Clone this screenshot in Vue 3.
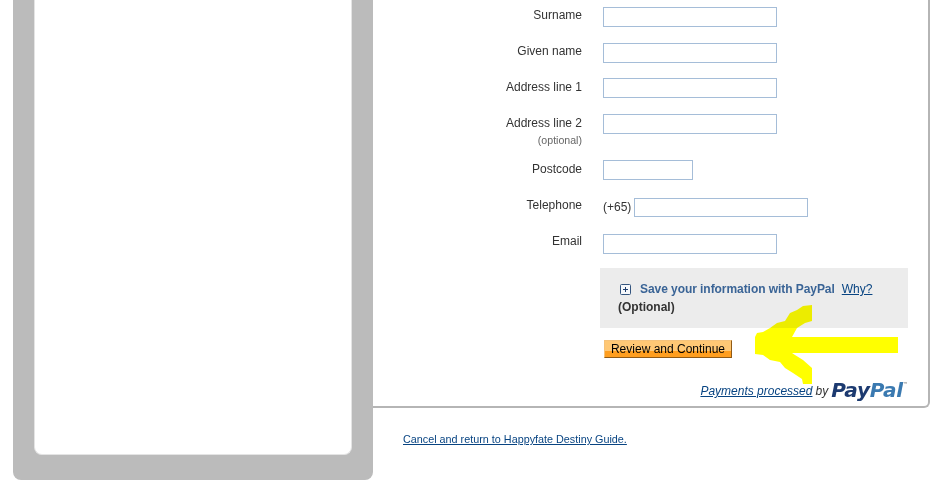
<script setup>
const fields = [
  { label: 'Surname', size: 'wide' },
  { label: 'Given name', size: 'wide' },
  { label: 'Address line 1', size: 'wide', pos: 'low' },
  { label: 'Address line 2', size: 'wide', note: '(optional)', pos: 'low' },
  { label: 'Postcode', size: 'short', pos: 'low' },
  { label: 'Telephone', size: 'tel', prefix: '(+65)', pos: 'high' },
  { label: 'Email', size: 'wide', pos: 'high' }
]
</script>

<template>
  <div class="page">
    <aside class="side">
      <div class="side-inner"></div>
    </aside>

    <main class="content">
      <section class="panel">
        <form class="form" @submit.prevent>
          <template v-for="f in fields" :key="f.label">
            <div class="label" :class="f.pos">
              {{ f.label }}
              <small v-if="f.note" class="note">{{ f.note }}</small>
            </div>
            <div class="control">
              <span v-if="f.prefix" class="prefix">{{ f.prefix }}</span>
              <input type="text" class="input" :class="f.size" />
            </div>
          </template>
        </form>

        <div class="save">
          <div class="save-line">
            <span class="plus">
              <svg width="11" height="11" viewBox="0 0 11 11">
                <rect x="0.5" y="0.5" width="10" height="10" rx="1" fill="#f6f8fb" stroke="#34557f" />
                <path d="M3 5.5h5M5.5 3v5" stroke="#1f3f6e" fill="none" />
              </svg>
            </span>
            <strong class="save-title">Save your information with PayPal</strong>
            <a class="why" href="#">Why?</a>
          </div>
          <strong class="optional">(Optional)</strong>
        </div>

        <button type="button" class="review">Review and Continue</button>

        <div class="powered">
          <a href="#" class="processed">Payments processed</a>
          <span class="by">by</span>
          <span class="logo"><b class="pay">Pay</b><b class="pal">Pal</b><i class="tm">™</i></span>
        </div>
      </section>

      <a class="cancel" href="#">Cancel and return to Happyfate Destiny Guide.</a>
    </main>

    <svg class="arrow" width="144" height="80" viewBox="0 0 144 80">
      <polygon
        fill="#ffff00"
        points="57,0 48,1 42,5 35,8 30,16 22,18 15,23 8,27 2,28 0,32 0,49 8,50 15,55 25,57 30,63 38,68 47,74 48,79 57,79 57,63 48,55 40,50 37,48 143,48 143,32 37,32 42,23 50,18 57,16"
      />
    </svg>
  </div>
</template>

<style>
html, body {
  margin: 0;
  background: #fff;
}
</style>

<style scoped>
.page {
  position: relative;
  display: flex;
  align-items: flex-start;
  width: 944px;
  height: 483px;
  overflow: hidden;
  font-family: "Liberation Sans", Arial, sans-serif;
  font-size: 12px;
  color: #333;
}

.side {
  box-sizing: border-box;
  width: 360px;
  height: 480px;
  margin-left: 13px;
  padding: 0 21px 25px;
  background: #bbb;
  border-radius: 0 0 8px 8px;
}
.side-inner {
  box-sizing: border-box;
  height: 100%;
  background: #fff;
  border: 1px solid #e4e4e4;
  border-top: 0;
  border-radius: 0 0 8px 8px;
}

.content {
  width: 557px;
}

.panel {
  box-sizing: border-box;
  height: 408px;
  padding-top: 7px;
  border-right: 2px solid #b5b5b5;
  border-bottom: 2px solid #b5b5b5;
  border-radius: 0 0 6px 0;
}

.form {
  display: grid;
  grid-template-columns: 209px 1fr;
  grid-template-rows: 36px 35px 36px 46px 38px 36px 34px;
  column-gap: 21px;
}
.label {
  text-align: right;
  line-height: 15px;
  padding-top: 1px;
}
.label.low {
  padding-top: 2px;
}
.label.high {
  padding-top: 0;
}
.note {
  display: block;
  margin-top: 3px;
  font-size: 10.6px;
  line-height: 12px;
  color: #666;
}
.control {
  display: flex;
  align-items: flex-start;
  gap: 3px;
}
.prefix {
  line-height: 18px;
}
.input {
  box-sizing: border-box;
  height: 20px;
  margin: 0;
  padding: 0 2px;
  background: #fff;
  border: 1px solid #a5bdd8;
  border-radius: 0;
}
.wide { width: 174px; }
.short { width: 90px; }
.tel { width: 174px; height: 19px; }

.save {
  box-sizing: border-box;
  width: 308px;
  height: 60px;
  margin-left: 227px;
  padding: 12px 18px 0;
  background: #ececec;
  line-height: 18px;
}
.save-line {
  display: flex;
  align-items: center;
}
.plus {
  display: flex;
  margin: 1px 9px 0 2px;
}
.save-title {
  color: #3a6496;
  letter-spacing: -0.06px;
}
.why {
  margin-left: 7px;
  color: #084482;
}
.optional {
  color: #333;
}

.review {
  display: block;
  box-sizing: border-box;
  width: 128px;
  height: 18px;
  margin: 12px 0 0 231px;
  padding: 0;
  font: 12px/1 "Liberation Sans", Arial, sans-serif;
  color: #000;
  background: linear-gradient(#ffc875 0, #ffc875 60%, #ff9e1f 60%, #ff9e1f 100%);
  border: 1px solid;
  border-color: #f5c27a #8f5a17 #8f5a17 #f5c27a;
  cursor: pointer;
}

.powered {
  display: flex;
  align-items: flex-end;
  justify-content: flex-end;
  gap: 3px;
  height: 20px;
  margin: 22px 20px 0 0;
  font-style: italic;
  line-height: 15px;
}
.processed,
.by {
  margin-bottom: 1px;
}
.processed {
  color: #084482;
}
.by {
  color: #333;
}
.logo {
  font-family: "DejaVu Sans", sans-serif;
  font-size: 20px;
  line-height: 20px;
  letter-spacing: -0.2px;
}
.pay { color: #1c3a70; }
.pal { color: #3a79b0; }
.tm {
  font-size: 5px;
  font-style: normal;
  letter-spacing: 0;
  vertical-align: 11px;
  color: #555;
}

.cancel {
  display: block;
  margin: 25px 0 0 30px;
  font-size: 10.8px;
  line-height: 13px;
  color: #084482;
}

.arrow {
  position: absolute;
  left: 755px;
  top: 305px;
  mix-blend-mode: multiply;
}
</style>
